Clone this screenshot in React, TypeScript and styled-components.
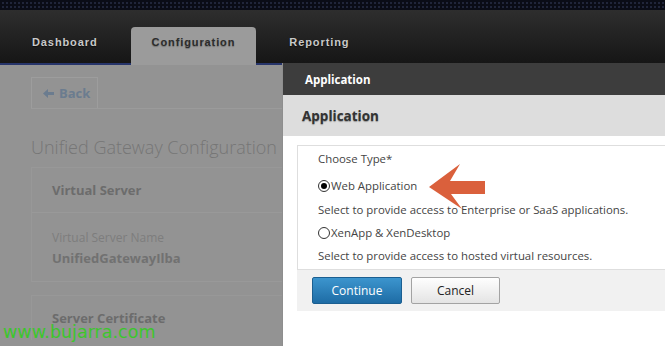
import React from 'react'
import styled, { createGlobalStyle } from 'styled-components'

const GlobalStyle = createGlobalStyle`
	html, body {
		margin: 0;
		padding: 0;
		background: #ffffff;
		overflow: hidden;
	}
	body {
		font-family: 'Open Sans', 'Noto Sans', sans-serif;
	}
`

const Page = styled.div`
	position: relative;
	width: 665px;
	height: 346px;
	overflow: hidden;
	display: flex;
	flex-direction: column;
`

const TopBand = styled.div`
	height: 10px;
	background-color: #0a0c16;
	background-image: radial-gradient(#20253a 1px, transparent 1.2px);
	background-size: 4px 4px;
	background-position: 1px 1px;
`

const NavBar = styled.div`
	height: 53px;
	background: linear-gradient(#2e2e2e, #161616);
	display: flex;
	align-items: flex-end;
	gap: 12px;
	padding-left: 11px;
`

const Tab = styled.div<{ $active?: boolean }>`
	position: relative;
	z-index: 1;
	height: 38px;
	margin-bottom: -2px;
	padding: 9px 21px 0;
	box-sizing: border-box;
	border-radius: 4px 4px 0 0;
	background: ${(p) => (p.$active ? '#9b9b9b' : 'transparent')};
	color: ${(p) => (p.$active ? '#2c2c2c' : '#c9c9c9')};
	text-shadow: ${(p) =>
		p.$active ? '0 1px 1px rgba(0,0,0,0.25)' : '0 1px 1px rgba(0,0,0,0.6)'};
	font-family: 'Liberation Sans', Arial, sans-serif;
	font-weight: bold;
	font-size: 11px;
	line-height: 13px;
	letter-spacing: 0.9px;
`

const Main = styled.div`
	flex: 1;
	display: flex;
	min-height: 0;
`

const LeftPage = styled.div`
	width: 282px;
	flex-shrink: 0;
	background: #939393;
	border-top: 2px solid #27356b;
	padding: 12px 0 0 31px;
	box-sizing: border-box;
	overflow: hidden;
`

const Toolbar = styled.div`
	display: flex;
	border-bottom: 1px solid #9b9b9b;
	margin-right: -10px;
`

const BackButton = styled.div`
	width: 67px;
	height: 31px;
	box-sizing: border-box;
	border: 1px solid #9d9d9d;
	border-bottom: none;
	display: flex;
	align-items: center;
	gap: 5px;
	padding-left: 11px;
	color: #6b7c8f;
	font-weight: bold;
	font-size: 13px;
`

const Title = styled.div`
	margin-top: 26px;
	color: #767676;
	font-size: 18px;
	font-weight: 300;
	white-space: nowrap;
	line-height: 24px;
`

const Card = styled.div<{ $gap: number }>`
	margin-top: ${(p) => p.$gap}px;
	margin-right: -10px;
	border-top: 1px solid #989898;
	border-left: 1px solid #989898;
`

const CardTitle = styled.div`
	height: 44px;
	padding-left: 20px;
	display: flex;
	align-items: center;
	color: #6c6c6c;
	font-weight: bold;
	font-size: 13px;
`

const FieldBox = styled.div`
	height: 70px;
	box-sizing: border-box;
	border-top: 1px solid #999999;
	border-bottom: 1px solid #999999;
	padding: 16px 20px 0;
`

const FieldLabel = styled.div`
	color: #7d7d7d;
	font-size: 12px;
	line-height: 18px;
`

const FieldValue = styled.div`
	color: #717171;
	font-weight: bold;
	font-size: 13px;
	line-height: 22px;
`

const Watermark = styled.div`
	position: absolute;
	left: 3px;
	bottom: 3px;
	color: #3cc62c;
	font-family: 'DejaVu Sans', Verdana, sans-serif;
	font-size: 17.5px;
	line-height: 21px;
	z-index: 2;
`

const Modal = styled.div`
	flex: 1;
	display: flex;
	flex-direction: column;
	background: #ffffff;
	border-left: 1px solid #8e8e8e;
`

const ModalHeader = styled.div`
	height: 32px;
	flex-shrink: 0;
	background: #3d3d3d;
	color: #ffffff;
	display: flex;
	align-items: center;
	padding-left: 22px;
	font-weight: bold;
	font-size: 11.5px;
`

const SubHeader = styled.div`
	height: 41px;
	flex-shrink: 0;
	background: #dddddd;
	color: #333333;
	display: flex;
	align-items: center;
	padding-left: 19px;
	font-weight: bold;
	font-size: 13.5px;
	text-shadow: 0 1px 1px rgba(0, 0, 0, 0.3);
`

const Body = styled.div`
	padding: 9px 0 0 14px;
`

const ChoiceBox = styled.div`
	position: relative;
	height: 125px;
	box-sizing: border-box;
	border: 1px solid #dedede;
	border-right: none;
	padding: 1px 0 0 20px;
	color: #444444;
	font-size: 11.4px;
`

const Line = styled.div<{ $top: number }>`
	margin-top: ${(p) => p.$top}px;
	line-height: 23px;
	height: 23px;
	display: flex;
	align-items: center;
	white-space: nowrap;
`

const Radio = styled.span<{ $checked?: boolean }>`
	width: 12px;
	height: 12px;
	box-sizing: border-box;
	border: 1px solid #333333;
	border-radius: 50%;
	margin-right: 1px;
	display: inline-flex;
	align-items: center;
	justify-content: center;
	&::after {
		content: '';
		width: 6px;
		height: 6px;
		border-radius: 50%;
		background: ${(p) => (p.$checked ? '#000000' : 'transparent')};
	}
`

const Arrow = styled.svg`
	position: absolute;
	left: 131px;
	top: 17px;
`

const Footer = styled.div`
	height: 41px;
	box-sizing: border-box;
	background: #f1f1f1;
	display: flex;
	gap: 9px;
	padding: 7px 0 0 15px;
`

const Button = styled.div<{ $primary?: boolean }>`
	width: ${(p) => (p.$primary ? 90 : 89)}px;
	height: 27px;
	box-sizing: border-box;
	border-radius: 2px;
	border: 1px solid ${(p) => (p.$primary ? '#1b5f91' : '#a3a3a3')};
	background: ${(p) =>
		p.$primary
			? 'linear-gradient(#3c95ce, #1e6ca5)'
			: 'linear-gradient(#fefefe, #e4e4e4)'};
	color: ${(p) => (p.$primary ? '#ffffff' : '#222222')};
	display: flex;
	align-items: center;
	justify-content: center;
	font-size: 12px;
`

export default function App() {
	return (
		<Page>
			<GlobalStyle />
			<TopBand />
			<NavBar>
				<Tab>Dashboard</Tab>
				<Tab $active>Configuration</Tab>
				<Tab>Reporting</Tab>
			</NavBar>
			<Main>
				<LeftPage>
					<Toolbar>
						<BackButton>
							<svg width="11" height="9" viewBox="0 0 11 9">
								<polygon
									points="0,4.5 5,0 5,3 11,3 11,6 5,6 5,9"
									fill="#6b7c8f"
								/>
							</svg>
							<span>Back</span>
						</BackButton>
					</Toolbar>
					<Title>Unified Gateway Configuration</Title>
					<Card $gap={8}>
						<CardTitle>Virtual Server</CardTitle>
						<FieldBox>
							<FieldLabel>Virtual Server Name</FieldLabel>
							<FieldValue>UnifiedGatewayIlba</FieldValue>
						</FieldBox>
					</Card>
					<Card $gap={13}>
						<CardTitle>Server Certificate</CardTitle>
					</Card>
				</LeftPage>
				<Modal>
					<ModalHeader>Application</ModalHeader>
					<SubHeader>Application</SubHeader>
					<Body>
						<ChoiceBox>
							<Line $top={0}>Choose Type*</Line>
							<Line $top={4}>
								<Radio $checked />
								Web Application
							</Line>
							<Line $top={1}>
								Select to provide access to Enterprise or SaaS
								applications.
							</Line>
							<Line $top={0}>
								<Radio />
								XenApp &amp; XenDesktop
							</Line>
							<Line $top={0}>
								Select to provide access to hosted virtual
								resources.
							</Line>
							<Arrow width="58" height="47" viewBox="0 0 58 47">
								<polygon
									points="0,24 31,1 21,18 56,18 56,31 22,31 33,46"
									fill="#da603c"
								/>
							</Arrow>
						</ChoiceBox>
						<Footer>
							<Button $primary>Continue</Button>
							<Button>Cancel</Button>
						</Footer>
					</Body>
				</Modal>
			</Main>
			<Watermark>www.bujarra.com</Watermark>
		</Page>
	)
}
